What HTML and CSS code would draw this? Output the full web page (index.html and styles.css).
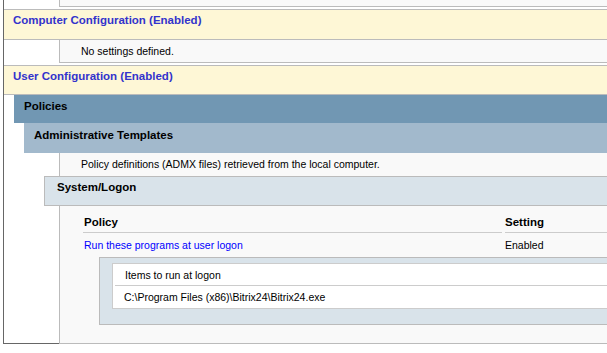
FILE: index.html
```html
<!DOCTYPE html>
<html lang="en">
<head>
    <meta charset="UTF-8">
    <title>Group Policy Results</title>
    <link rel="stylesheet" href="styles.css">
</head>
<body>
    <div class="report">
        <div class="info info-top"></div>

        <div class="he0">Computer Configuration (Enabled)</div>
        <div class="info info-empty">No settings defined.</div>

        <div class="he0 he0-user">User Configuration (Enabled)</div>
        <div class="he1h">Policies</div>
        <div class="he1">Administrative Templates</div>
        <div class="info info-admx">Policy definitions (ADMX files) retrieved from the local computer.</div>
        <div class="he3">System/Logon</div>

        <div class="he4i">
            <div class="policy-row policy-head">
                <div class="col-name">Policy</div>
                <div class="col-setting">Setting</div>
            </div>
            <div class="policy-row policy-data">
                <div class="col-name explain">Run these programs at user logon</div>
                <div class="col-setting">Enabled</div>
            </div>

            <div class="detail">
                <div class="subtable">
                    <div class="sub-head">Items to run at logon</div>
                    <div class="sub-row">C:\Program Files (x86)\Bitrix24\Bitrix24.exe</div>
                </div>
            </div>
        </div>
    </div>
</body>
</html>
```

FILE: styles.css
```css
body {
    margin: 0;
    background: #ffffff;
    font-family: 'Liberation Sans', Arial, sans-serif;
    font-size: 10.5px;
    color: #000000;
}

.report {
    margin-left: 3px;
    border-left: 1px solid #666666;
    border-bottom: 1px solid #666666;
}

/* grey info strips */
.info {
    margin-left: 55px;
    padding-left: 21px;
    background: #f9f9f9;
    border-left: 1px solid #bbbbbb;
    border-bottom: 1px solid #bbbbbb;
}

.info-top {
    height: 6px;
    margin-bottom: 2px;
}

.info-empty {
    height: 22px;
    line-height: 22px;
    margin-bottom: 2px;
}

.info-admx {
    height: 23px;
    line-height: 23px;
}

/* section headers */
.he0 {
    height: 26px;
    padding: 3px 0 0 9px;
    line-height: 14px;
    background: #fef7d6;
    border-top: 1px solid #bbbbbb;
    border-bottom: 1px solid #bbbbbb;
    color: #3333cc;
    font-size: 11.5px;
    font-weight: bold;
}

.he0-user {
    height: 25px;
}

.he1h {
    margin-left: 10px;
    margin-top: -1px;
    height: 24px;
    padding: 4px 0 0 10px;
    line-height: 14px;
    background: #7197b3;
    border-top: 1px solid #bbbbbb;
    font-size: 11.5px;
    font-weight: bold;
}

.he1 {
    margin-left: 20px;
    height: 25px;
    padding: 5px 0 0 10px;
    line-height: 14px;
    background: #a2b9cc;
    font-size: 11.5px;
    font-weight: bold;
}

.he3 {
    margin-left: 40px;
    margin-top: -1px;
    height: 25px;
    padding: 3px 0 0 12px;
    line-height: 14px;
    background: #d9e3ea;
    border: 1px solid #bbbbbb;
    border-right: none;
    font-size: 11.5px;
    font-weight: bold;
}

/* policy content */
.he4i {
    position: relative;
    margin-left: 55px;
    margin-bottom: -1px;
    padding: 9px 0 18px 23px;
    background: #f9f9f9;
    border-left: 1px solid #bbbbbb;
    border-bottom: 1px solid #bbbbbb;
}

.policy-row {
    display: flex;
    gap: 3px;
}

.col-name {
    width: 418px;
    padding-left: 1px;
}

.col-setting {
    flex: 1;
}

.policy-head > div {
    line-height: 14px;
    padding-bottom: 3px;
    border-bottom: 1px solid #cccccc;
    font-size: 11.5px;
    font-weight: bold;
}

.policy-data > div {
    line-height: 24px;
}

.explain {
    color: #0000ff;
}

.detail {
    margin-left: 16px;
    padding: 5px 0 15px 12px;
    background: #d9e3ea;
    border: 1px solid #bbbbbb;
    border-right: none;
}

.subtable {
    background: #ffffff;
    border: 1px solid #cccccc;
    border-right: none;
}

.sub-head {
    margin-left: 2px;
    padding: 1px 0 0 10px;
    line-height: 20px;
    border-bottom: 1px solid #cccccc;
}

.sub-row {
    padding: 1px 0 0 11px;
    line-height: 21px;
}
```
